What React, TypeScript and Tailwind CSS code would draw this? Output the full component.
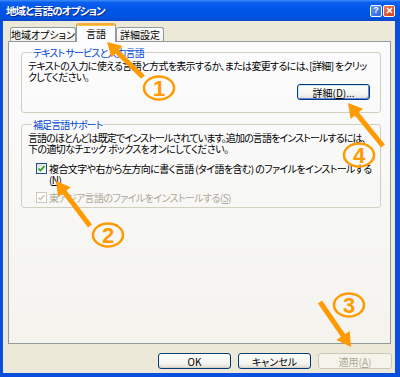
const ORANGE = "#ff9a00";

function arrowHead(tx: number, ty: number, fx: number, fy: number, len = 14, half = 8) {
  const dx = tx - fx;
  const dy = ty - fy;
  const d = Math.hypot(dx, dy);
  const ux = dx / d;
  const uy = dy / d;
  const bx = tx - ux * len;
  const by = ty - uy * len;
  const px = -uy * half;
  const py = ux * half;
  return {
    points: `${tx},${ty} ${bx + px},${by + py} ${bx - px},${by - py}`,
    bx: tx - ux * (len - 2),
    by: ty - uy * (len - 2),
  };
}

const arrows = [
  { tx: 107, ty: 42, fx: 143, fy: 77 },
  { tx: 348, ty: 103, fx: 383, fy: 146 },
  { tx: 56, ty: 181, fx: 90, fy: 226 },
  { tx: 351, ty: 347, fx: 320, fy: 302 },
];

const marks = [
  { cx: 159, cy: 88, n: "1" },
  { cx: 359, cy: 155, n: "4" },
  { cx: 108, cy: 235, n: "2" },
  { cx: 349, cy: 305, n: "3" },
];

function Annotations() {
  return (
    <svg className="pointer-events-none absolute inset-0" width="400" height="377" viewBox="0 0 400 377">
      {arrows.map((a, i) => {
        const h = arrowHead(a.tx, a.ty, a.fx, a.fy);
        return (
          <g key={i}>
            <line x1={a.fx} y1={a.fy} x2={h.bx} y2={h.by} stroke={ORANGE} strokeWidth="5" />
            <polygon points={h.points} fill={ORANGE} />
          </g>
        );
      })}
      {marks.map((m) => (
        <g key={m.n}>
          <ellipse cx={m.cx} cy={m.cy} rx="15" ry="11.5" fill="none" stroke={ORANGE} strokeWidth="2.5" />
          <text
            x={m.cx}
            y={m.cy + 8}
            textAnchor="middle"
            fill={ORANGE}
            fontSize="22"
            fontWeight="bold"
            fontFamily="'Liberation Sans', sans-serif"
          >
            {m.n}
          </text>
        </g>
      ))}
    </svg>
  );
}

function TitleBar() {
  return (
    <div className="flex h-[21px] items-center justify-between bg-[linear-gradient(to_bottom,#3b8cf8_0%,#0a5fef_12%,#0055e8_50%,#0052e0_85%,#0846c8_100%)] pl-[6px] pr-[5px]">
      <span className="text-[10.5px] font-bold leading-[12px] tracking-[-0.9px] text-white [text-shadow:1px_1px_#0b2a8a]">地域と言語のオプション</span>
      <div className="flex gap-[1px]">
        <div className="flex h-[12px] w-[12px] items-center justify-center rounded-[2px] border border-white bg-[linear-gradient(135deg,#5d96f5,#2a66e0)] font-['Liberation_Sans',sans-serif] text-[9px] font-bold leading-none text-white">
          ?
        </div>
        <div className="flex h-[12px] w-[12px] items-center justify-center rounded-[2px] border border-white bg-[linear-gradient(135deg,#ef7a5c,#d23c14)]">
          <svg width="7" height="7" viewBox="0 0 7 7">
            <path d="M1 1 L6 6 M6 1 L1 6" stroke="white" strokeWidth="1.6" />
          </svg>
        </div>
      </div>
    </div>
  );
}

function Tab({ label, width, active }: { label: string; width: string; active?: boolean }) {
  if (active) {
    return (
      <div className={`${width} relative z-10 -mb-[1px] flex h-[19px] flex-col rounded-t-[3px] border-x border-[#919b9c] bg-[#fcfcfe]`}>
        <div className="h-[2px] rounded-t-[3px] bg-[#f5a941] shadow-[0_1px_0_#ffc83c]" />
        <div className="flex flex-1 items-center justify-center pb-[1px]">{label}</div>
      </div>
    );
  }
  return (
    <div className={`${width} flex h-[14px] items-center justify-center rounded-t-[3px] border border-b-0 border-[#919b9c] bg-[linear-gradient(to_bottom,#ffffff,#f2f1ea)]`}>
      {label}
    </div>
  );
}

function Button({ children, width, disabled, focus }: { children: React.ReactNode; width: string; disabled?: boolean; focus?: boolean }) {
  const base = `${width} flex h-[16px] items-center justify-center rounded-[3px] border`;
  if (disabled) {
    return <div className={`${base} border-[#c9c7ba] bg-[#f5f4ea] text-[#aca899]`}>{children}</div>;
  }
  return (
    <div
      className={`${base} border-[#003c74] bg-[linear-gradient(to_bottom,#ffffff,#f3f3ef_70%,#dcd9cf)] ${
        focus ? "shadow-[inset_1px_1px_0_#cee7ff,inset_-1px_-1px_0_#6982ee]" : "shadow-[inset_0_-1px_0_#d6d0c5]"
      }`}
    >
      {children}
    </div>
  );
}

function Check({ disabled }: { disabled?: boolean }) {
  return (
    <div
      className={`flex h-[11px] w-[11px] shrink-0 items-center justify-center border ${
        disabled ? "border-[#cac8bb] bg-white" : "border-[#1c5180] bg-[linear-gradient(135deg,#dcdcd7,#ffffff)]"
      }`}
    >
      <svg width="7" height="7" viewBox="0 0 7 7">
        <path d="M0.5 3.5 L2.5 5.5 L6.5 1" fill="none" stroke={disabled ? "#cac8bb" : "#21a121"} strokeWidth="1.6" />
      </svg>
    </div>
  );
}

export default function App() {
  return (
    <div className="relative flex h-[377px] w-[400px] flex-col overflow-hidden bg-[#0a4fdc] font-['Noto_Sans_CJK_JP',sans-serif] text-[10px] leading-[11px] text-black [font-feature-settings:'palt']">
      <TitleBar />
      <div className="mb-[4px] ml-[3px] mr-[5px] flex flex-1 flex-col bg-[#ece9d8]">
        <div className="flex h-[20px] items-end pl-[7px]">
          <Tab label="地域オプション" width="w-[66px]" />
          <Tab label="言語" width="w-[40px]" active />
          <Tab label="詳細設定" width="w-[48px]" />
        </div>

        <div className="ml-[5px] mr-[4px] h-[303px] border border-[#919b9c] bg-[linear-gradient(to_bottom,#fcfcfe,#f4f3ee)] pt-[5px] tracking-[-0.6px]">
          <fieldset className="ml-[12px] mr-[9px] h-[66px] rounded-[3px] border border-[#d0d0bf] px-[6px]">
            <legend className="ml-[4px] px-[1px] tracking-[-0.9px] text-[#0046d5]">テキスト サービスと入力言語</legend>
            <p className="mt-[2px] whitespace-nowrap tracking-[-0.68px]">
              テキストの入力に使える言語と方式を表示するか、または変更するには、[詳細] をクリッ
              <br />
              クしてください。
            </p>
            <div className="mt-[2px] flex justify-end pr-[4px] tracking-normal">
              <Button width="w-[73px]" focus>
                詳細(<span className="underline">D</span>)...
              </Button>
            </div>
          </fieldset>

          <fieldset className="ml-[12px] mr-[9px] mt-[6px] h-[89px] rounded-[3px] border border-[#d0d0bf] px-[6px]">
            <legend className="ml-[4px] px-[1px] tracking-[-0.9px] text-[#0046d5]">補足言語サポート</legend>
            <p className="mt-[2px] whitespace-nowrap">
              <span className="tracking-[-0.88px]">言語のほとんどは既定でインストールされています。追加の言語をインストールするには、</span>
              <br />
              下の適切なチェック ボックスをオンにしてください。
            </p>
            <div className="mt-[9px] flex gap-[2px] pl-[8px]">
              <Check />
              <div className="whitespace-nowrap">
                複合文字や右から左方向に書く言語 (タイ語を含む) のファイルをインストールする
                <br />
                (<span className="underline">N</span>)
              </div>
            </div>
            <div className="mt-[7px] flex gap-[2px] pl-[8px] text-[#aca899]">
              <Check disabled />
              <div className="whitespace-nowrap">
                東アジア言語のファイルをインストールする(<span className="underline">S</span>)
              </div>
            </div>
          </fieldset>
        </div>

        <div className="mt-[9px] flex justify-end gap-[7px] pr-[3px]">
          <Button width="w-[73px]">OK</Button>
          <Button width="w-[73px]">キャンセル</Button>
          <Button width="w-[74px]" disabled>
            適用(<span className="underline">A</span>)
          </Button>
        </div>
      </div>
      <Annotations />
    </div>
  );
}
